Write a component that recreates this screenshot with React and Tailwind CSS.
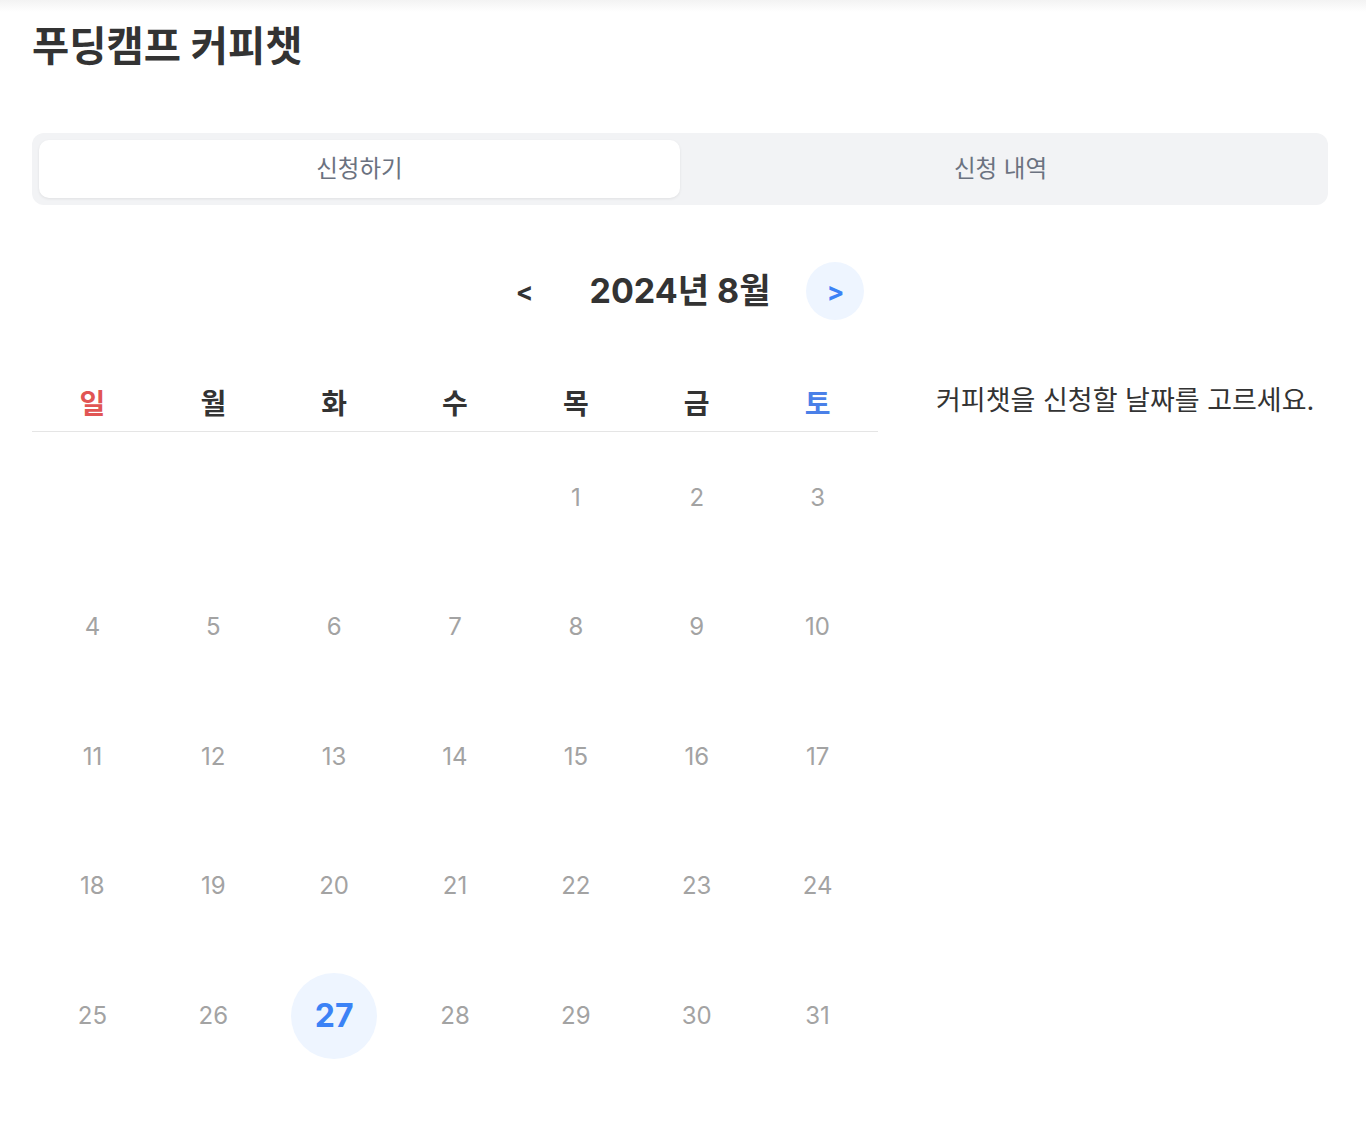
const weekdays = [
  { label: "일", color: "text-[#e15554]" },
  { label: "월", color: "text-[#333333]" },
  { label: "화", color: "text-[#333333]" },
  { label: "수", color: "text-[#333333]" },
  { label: "목", color: "text-[#333333]" },
  { label: "금", color: "text-[#333333]" },
  { label: "토", color: "text-[#4a80e8]" },
];

// August 2024 starts on Thursday
const buildWeeks = () => {
  const cells = [null, null, null, null];
  for (let d = 1; d <= 31; d++) cells.push(d);
  const weeks = [];
  for (let i = 0; i < cells.length; i += 7) weeks.push(cells.slice(i, i + 7));
  return weeks;
};

const SELECTED = 27;

export default function App() {
  const weeks = buildWeeks();

  return (
    <div className="min-h-[1144px] bg-white font-['Inter','Noto_Sans_CJK_KR',sans-serif] text-[#333333]">
      <div className="h-3 bg-gradient-to-b from-[#f3f3f3] to-white" />
      <div className="pl-8 pr-[38px] pt-[13px]">
        <h1 className="text-[40.5px] leading-[44px] font-bold text-[#333333]">
          푸딩캠프 커피챗
        </h1>

        {/* Tabs */}
        <div className="mt-[64px] flex h-[72px] rounded-xl bg-[#f2f3f5] p-[7px]">
          <button className="flex-1 rounded-[10px] bg-white text-[23.5px] text-[#6b7280] shadow-[0_1px_3px_rgba(0,0,0,0.08)]">
            신청하기
          </button>
          <button className="flex-1 rounded-[10px] text-[23.5px] text-[#6b7280]">
            신청 내역
          </button>
        </div>

        {/* Month navigation */}
        <div className="mt-[57px] flex items-center justify-center gap-[36px]">
          <button className="flex h-[58px] w-[58px] items-center justify-center rounded-full text-[26px] font-bold text-[#333333]">
            &lt;
          </button>
          <h2 className="text-[34px] leading-[40px] font-bold text-[#333333]">2024년 8월</h2>
          <button className="flex h-[58px] w-[58px] items-center justify-center rounded-full bg-[#eef5ff] text-[26px] font-bold text-[#3b82f6]">
            &gt;
          </button>
        </div>

        <div className="mt-[54px] flex items-start gap-[58px]">
          {/* Calendar */}
          <div className="w-[846px]">
            <div className="grid h-[58px] grid-cols-7 border-b border-[#e5e5e5]">
              {weekdays.map((w) => (
                <div
                  key={w.label}
                  className={`flex items-center justify-center pt-[3px] text-[28px] font-bold ${w.color}`}
                >
                  {w.label}
                </div>
              ))}
            </div>
            {weeks.map((week, i) => (
              <div key={i} className="grid h-[129.5px] grid-cols-7 pt-[2px]">
                {Array.from({ length: 7 }).map((_, j) => {
                  const day = week[j];
                  return (
                    <div key={j} className="flex items-center justify-center">
                      {day === SELECTED ? (
                        <span className="flex h-[86px] w-[86px] items-center justify-center rounded-full bg-[#eef5ff] text-[32px] font-bold text-[#3b82f6]">
                          {day}
                        </span>
                      ) : day ? (
                        <span className="text-[24px] text-[#a3a3a3]">{day}</span>
                      ) : null}
                    </div>
                  );
                })}
              </div>
            ))}
          </div>

          {/* Hint */}
          <p className="pt-[9px] text-[27px] leading-[36px] whitespace-nowrap text-[#333333]">
            커피챗을 신청할 날짜를 고르세요.
          </p>
        </div>
      </div>
    </div>
  );
}
